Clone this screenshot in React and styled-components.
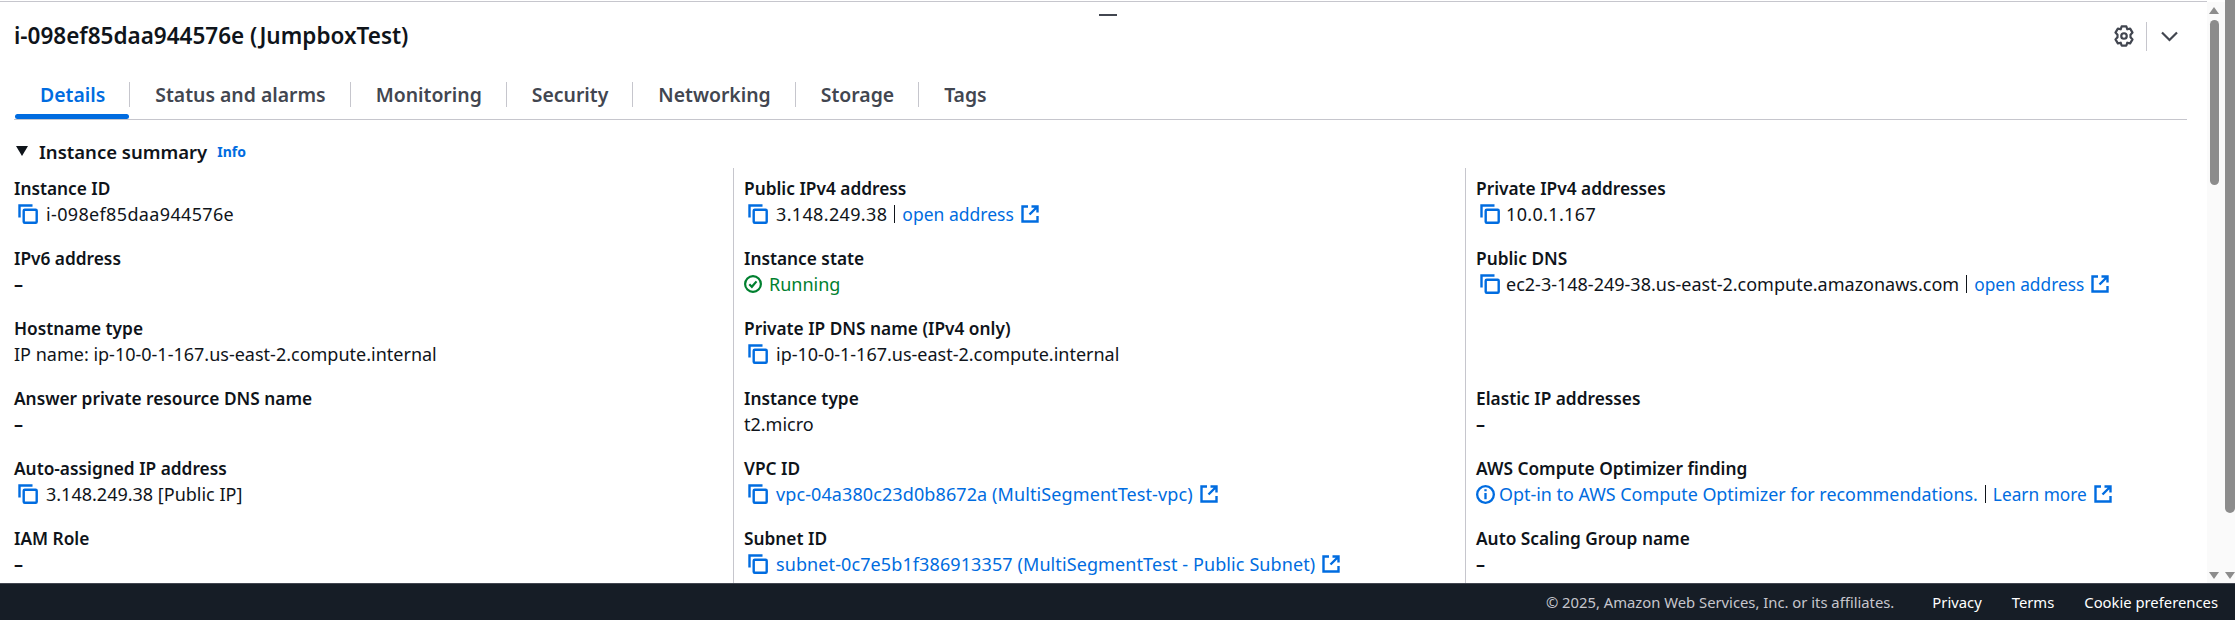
import React from "react";
import styled, { createGlobalStyle } from "styled-components";

const Global = createGlobalStyle`
  html, body {
    margin: 0;
    height: 620px;
    overflow: hidden;
    background: #fff;
  }
  * { box-sizing: border-box; }
`;

const Page = styled.div`
  display: flex;
  flex-direction: column;
  width: 2235px;
  height: 620px;
  font-family: "Noto Sans", "Open Sans", sans-serif;
  font-size: 18px;
  color: #0f141a;
`;
const Body = styled.div`
  flex: 1;
  display: flex;
  min-height: 0;
`;
const Main = styled.main`
  position: relative;
  flex: 1;
  min-width: 0;
  overflow: hidden;
  border-top: 1px solid #c6c6cd;
  margin-top: 1px;
  padding-left: 14px;
  padding-right: 20px;
`;
const DragHandle = styled.div`
  position: absolute;
  top: 12px;
  left: 1099px;
  width: 18px;
  height: 2px;
  background: #424650;
`;
const Header = styled.header`
  display: flex;
  align-items: center;
  justify-content: space-between;
  height: 68px;
  padding-right: 9px;
`;
const Title = styled.h1`
  margin: 0;
  font-size: 22.5px;
  font-weight: 600;
  line-height: 28px;
  color: #0f141a;
`;
const HeaderActions = styled.div`
  display: flex;
  align-items: center;
  color: #424650;
`;
const ActionDivider = styled.span`
  width: 1px;
  height: 29px;
  margin: 0 14px 0 11px;
  background: #c6c6cd;
`;
const Tabs = styled.nav`
  display: flex;
  align-items: flex-start;
  height: 50px;
  padding-left: 1px;
  border-bottom: 1px solid #c6c6cd;
`;
const Tab = styled.a`
  position: relative;
  display: block;
  height: 49px;
  padding: 12px 25px 0;
  font-size: 19.4px;
  font-weight: 600;
  line-height: 26px;
  color: ${({ $active }) => ($active ? "#006ce0" : "#424650")};
  &:not(:last-child)::after {
    content: "";
    position: absolute;
    right: 0;
    top: 12px;
    width: 1px;
    height: 25px;
    background: #c6c6cd;
  }
  ${({ $active }) =>
    $active &&
    `&::before {
      content: "";
      position: absolute;
      left: 0;
      right: 1px;
      bottom: 0;
      height: 5px;
      border-radius: 3px;
      background: #006ce0;
    }`}
`;
const SectionHead = styled.div`
  display: flex;
  align-items: center;
  height: 48px;
  padding-top: 14px;
  font-size: 18.5px;
  font-weight: 600;
`;
const Caret = styled.span`
  width: 0;
  height: 0;
  margin: 0 11px 0 2px;
  border-left: 6px solid transparent;
  border-right: 6px solid transparent;
  border-top: 10px solid #0f141a;
`;
const InfoLink = styled.a`
  margin-left: 10px;
  font-size: 14px;
  font-weight: 700;
  color: #006ce0;
`;
const Columns = styled.div`
  display: grid;
  grid-template-columns: 719px 732px 1fr;
`;
const Column = styled.div`
  padding-left: ${({ $first }) => ($first ? "0" : "10px")};
  border-left: ${({ $first }) => ($first ? "none" : "1px solid #c6c6cd")};
  height: 420px;
`;
const Field = styled.div`
  height: 70px;
  padding-top: 11px;
`;
const Label = styled.div`
  font-size: 17.3px;
  font-weight: 600;
  line-height: 20px;
  height: 20px;
`;
const Value = styled.div`
  display: flex;
  align-items: center;
  height: 24px;
  margin-top: 3px;
  white-space: pre;
  color: ${({ $color }) => $color || "#0f141a"};
`;
const Dash = styled(Value)`
  font-weight: 700;
`;
const Numeric = styled.span`
  letter-spacing: 0.35px;
`;
const Link = styled.a`
  font-size: ${({ $size }) => $size || 17.5}px;
  letter-spacing: ${({ $id }) => ($id ? "0.1px" : "0")};
  color: #006ce0;
`;
const Pipe = styled.span`
  width: 1px;
  height: 18px;
  margin: 0 7px;
  background: #0f141a;
`;
const CopySvg = styled.svg`
  flex: none;
  margin: 0 ${({ $gap }) => $gap}px 0 4px;
`;
const ExternalSvg = styled.svg`
  flex: none;
  margin-left: 7px;
`;
const StatusSvg = styled.svg`
  flex: none;
  margin-right: ${({ $gap }) => $gap}px;
`;
const Footer = styled.footer`
  display: flex;
  align-items: center;
  justify-content: flex-end;
  gap: 30px;
  height: 37px;
  padding-right: 17px;
  background: #161d26;
  border-top: 1px solid #424650;
  font-size: 14.8px;
  color: #fff;
  flex: none;
`;
const Copyright = styled.span`
  color: #c6c6cd;
  margin-right: 8px;
`;
const InnerBar = styled.div`
  position: relative;
  flex: none;
  width: 18px;
  margin-top: 2px;
  background: #fafafa;
`;
const InnerThumb = styled.div`
  position: absolute;
  top: 18px;
  left: 3px;
  width: 9px;
  height: 165px;
  border-radius: 5px;
  background: #8c8c8c;
`;
const Arrow = styled.span`
  position: absolute;
  left: ${({ $left }) => $left}px;
  ${({ $up, $pos }) => ($up ? `top: ${$pos}px;` : `bottom: ${$pos}px;`)}
  width: 0;
  height: 0;
  border-left: 5px solid transparent;
  border-right: 5px solid transparent;
  ${({ $up }) =>
    $up ? "border-bottom: 7px solid #8c8c8c;" : "border-top: 7px solid #8c8c8c;"}
`;
const OuterBar = styled.div`
  position: relative;
  flex: none;
  width: 10px;
  background: #fafafa;
`;
const OuterThumb = styled.div`
  height: 513px;
  border-radius: 0 0 5px 5px;
  background: #8c8c8c;
`;

const CopyIcon = ({ gap = 8 }) => (
  <CopySvg $gap={gap} width="20" height="20" viewBox="0 0 20 20" fill="none" stroke="#006ce0" strokeWidth="2.4">
    <path d="M1.5 13.5V1.5h13" />
    <rect x="5.7" y="5.7" width="13" height="13" rx="1" />
  </CopySvg>
);

const ExternalIcon = () => (
  <ExternalSvg width="18" height="18" viewBox="0 0 18 18" fill="none" stroke="#006ce0" strokeWidth="2.4">
    <path d="M7 1.5H1.5v15h15V11" />
    <path d="M10.5 1.5h6v6M16.5 1.5 8.5 9.5" />
  </ExternalSvg>
);

const GearIcon = () => (
  <svg width="22" height="22" viewBox="0 0 24 24" fill="none" stroke="currentColor" strokeWidth="2.4" strokeLinejoin="round">
    <path d="M9.4 1.6h5.2l1 3.1 3.1-.8 2.6 4.4-2.2 2.4v2.6l2.2 2.4-2.6 4.4-3.1-.8-1 3.1H9.4l-1-3.1-3.1.8-2.6-4.4 2.2-2.4v-2.6L2.7 8.3l2.6-4.4 3.1.8z" />
    <circle cx="12" cy="12" r="3" />
  </svg>
);

const ChevronIcon = () => (
  <svg width="17" height="11" viewBox="0 0 17 11" fill="none" stroke="currentColor" strokeWidth="2.2">
    <path d="M1 1.5 8.5 9 16 1.5" />
  </svg>
);

const StatusIcon = () => (
  <StatusSvg $gap={7} width="18" height="18" viewBox="0 0 18 18" fill="none" stroke="#00802f" strokeWidth="2.2">
    <circle cx="9" cy="9" r="7.9" />
    <path d="m5.3 9.2 2.6 2.6 4.6-5.4" />
  </StatusSvg>
);

const InfoIcon = () => (
  <StatusSvg $gap={4} width="19" height="19" viewBox="0 0 18 18" fill="none" stroke="#006ce0" strokeWidth="2.2">
    <circle cx="9" cy="9" r="7.9" />
    <path d="M9 7.5v6M9 4v2" />
  </StatusSvg>
);

const tabs = ["Details", "Status and alarms", "Monitoring", "Security", "Networking", "Storage", "Tags"];

const CopyValue = ({ gap, children }) => (
  <Value>
    <CopyIcon gap={gap} />
    {children}
  </Value>
);

const App = () => (
  <Page>
    <Global />
    <Body>
      <Main>
        <DragHandle />
        <Header>
          <Title>i-098ef85daa944576e (JumpboxTest)</Title>
          <HeaderActions>
            <GearIcon />
            <ActionDivider />
            <ChevronIcon />
          </HeaderActions>
        </Header>
        <Tabs>
          {tabs.map((t, i) => (
            <Tab key={t} $active={i === 0}>
              {t}
            </Tab>
          ))}
        </Tabs>
        <SectionHead>
          <Caret />
          Instance summary
          <InfoLink>Info</InfoLink>
        </SectionHead>
        <Columns>
          <Column $first>
            <Field>
              <Label>Instance ID</Label>
              <CopyValue>
                <Numeric>i-098ef85daa944576e</Numeric>
              </CopyValue>
            </Field>
            <Field>
              <Label>IPv6 address</Label>
              <Dash>–</Dash>
            </Field>
            <Field>
              <Label>Hostname type</Label>
              <Value>IP name: ip-10-0-1-167.us-east-2.compute.internal</Value>
            </Field>
            <Field>
              <Label>Answer private resource DNS name</Label>
              <Dash>–</Dash>
            </Field>
            <Field>
              <Label>Auto-assigned IP address</Label>
              <CopyValue>3.148.249.38 [Public IP]</CopyValue>
            </Field>
            <Field>
              <Label>IAM Role</Label>
              <Dash>–</Dash>
            </Field>
          </Column>
          <Column>
            <Field>
              <Label>Public IPv4 address</Label>
              <CopyValue>
                <Numeric>3.148.249.38</Numeric>
                <Pipe />
                <Link>open address</Link>
                <ExternalIcon />
              </CopyValue>
            </Field>
            <Field>
              <Label>Instance state</Label>
              <Value $color="#00802f">
                <StatusIcon />
                Running
              </Value>
            </Field>
            <Field>
              <Label>Private IP DNS name (IPv4 only)</Label>
              <CopyValue>ip-10-0-1-167.us-east-2.compute.internal</CopyValue>
            </Field>
            <Field>
              <Label>Instance type</Label>
              <Value>t2.micro</Value>
            </Field>
            <Field>
              <Label>VPC ID</Label>
              <CopyValue>
                <Link $id $size={18}>vpc-04a380c23d0b8672a (MultiSegmentTest-vpc)</Link>
                <ExternalIcon />
              </CopyValue>
            </Field>
            <Field>
              <Label>Subnet ID</Label>
              <CopyValue>
                <Link $id $size={18}>subnet-0c7e5b1f386913357 (MultiSegmentTest - Public Subnet)</Link>
                <ExternalIcon />
              </CopyValue>
            </Field>
          </Column>
          <Column>
            <Field>
              <Label>Private IPv4 addresses</Label>
              <CopyValue gap={6}>
                <Numeric>10.0.1.167</Numeric>
              </CopyValue>
            </Field>
            <Field>
              <Label>Public DNS</Label>
              <CopyValue gap={6}>
                ec2-3-148-249-38.us-east-2.compute.amazonaws.com
                <Pipe />
                <Link $size={17.3}>open address</Link>
                <ExternalIcon />
              </CopyValue>
            </Field>
            <Field />
            <Field>
              <Label>Elastic IP addresses</Label>
              <Dash>–</Dash>
            </Field>
            <Field>
              <Label>AWS Compute Optimizer finding</Label>
              <Value>
                <InfoIcon />
                <Link $size={17.9}>Opt-in to AWS Compute Optimizer for recommendations.</Link>
                <Pipe />
                <Link $size={17.3}>Learn more</Link>
                <ExternalIcon />
              </Value>
            </Field>
            <Field>
              <Label>Auto Scaling Group name</Label>
              <Dash>–</Dash>
            </Field>
          </Column>
        </Columns>
      </Main>
      <InnerBar>
        <Arrow $up $left={2} $pos={5} />
        <InnerThumb />
        <Arrow $left={2} $pos={4} />
      </InnerBar>
      <OuterBar>
        <OuterThumb />
        <Arrow $left={0} $pos={4} />
      </OuterBar>
    </Body>
    <Footer>
      <Copyright>© 2025, Amazon Web Services, Inc. or its affiliates.</Copyright>
      <span>Privacy</span>
      <span>Terms</span>
      <span>Cookie preferences</span>
    </Footer>
  </Page>
);

export default App;
